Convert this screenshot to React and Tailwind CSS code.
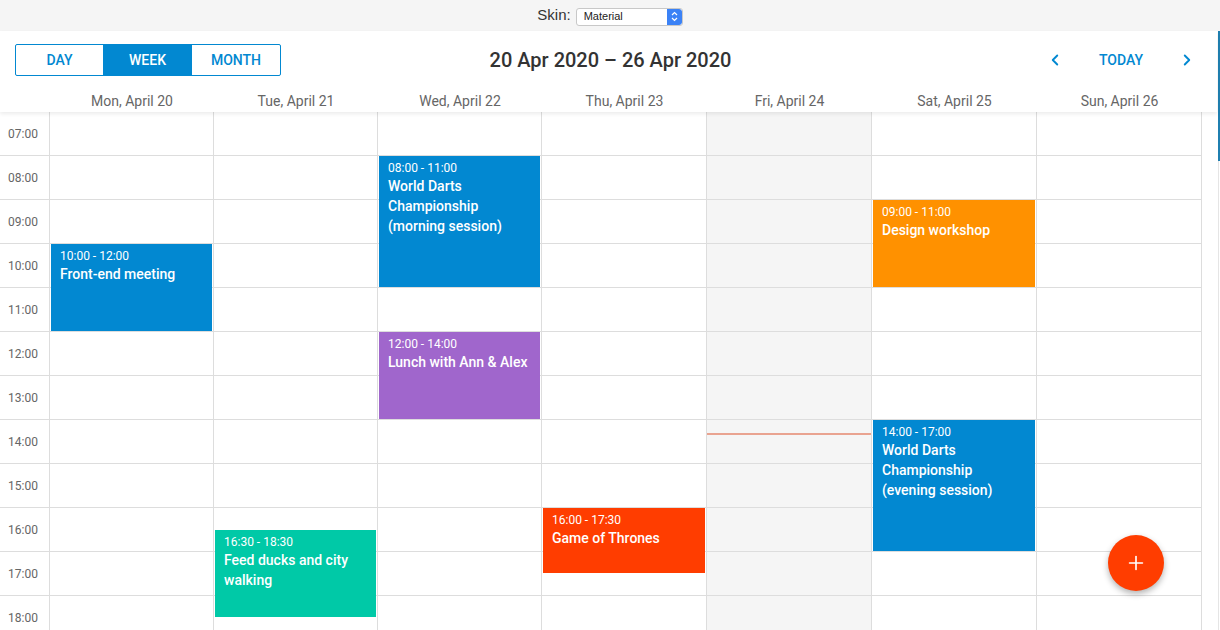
import React from "react";
import { ChevronLeft, ChevronRight, Plus } from "lucide-react";

const days = [
  "Mon, April 20",
  "Tue, April 21",
  "Wed, April 22",
  "Thu, April 23",
  "Fri, April 24",
  "Sat, April 25",
  "Sun, April 26",
];

const hours = ["07:00", "08:00", "09:00", "10:00", "11:00", "12:00", "13:00", "14:00", "15:00", "16:00", "17:00", "18:00"];

const ROW = 44;

const events = [
  { day: 0, start: 10, end: 12, time: "10:00 - 12:00", title: "Front-end meeting", color: "bg-[#0288d1]" },
  { day: 1, start: 16.5, end: 18.5, time: "16:30 - 18:30", title: "Feed ducks and city walking", color: "bg-[#00c9a7]" },
  { day: 2, start: 8, end: 11, time: "08:00 - 11:00", title: "World Darts Championship (morning session)", color: "bg-[#0288d1]" },
  { day: 2, start: 12, end: 14, time: "12:00 - 14:00", title: "Lunch with Ann & Alex", color: "bg-[#a066cc]" },
  { day: 3, start: 16, end: 17.5, time: "16:00 - 17:30", title: "Game of Thrones", color: "bg-[#ff3d00]" },
  { day: 5, start: 9, end: 11, time: "09:00 - 11:00", title: "Design workshop", color: "bg-[#ff9100]" },
  { day: 5, start: 14, end: 17, time: "14:00 - 17:00", title: "World Darts Championship (evening session)", color: "bg-[#0288d1]" },
];

const EventCard = ({ ev }) => (
  <div
    className={`absolute left-[1px] right-[1px] ${ev.color} text-white pl-[9px] pr-2 pt-[4px] overflow-hidden`}
    style={{ top: (ev.start - 7) * ROW, height: (ev.end - ev.start) * ROW - 1 }}
  >
    <div className="text-[12px] leading-[16px]">{ev.time}</div>
    <div className="text-[14px] leading-[20px] font-medium">{ev.title}</div>
  </div>
);

const App = () => {
  return (
    <div className="w-[1220px] h-[630px] overflow-hidden bg-white font-['Roboto',sans-serif] relative">
      {/* skin bar */}
      <div className="h-[31px] bg-[#f5f5f5] flex items-center justify-center gap-[5px]">
        <span className="text-[15px] text-[#333] font-['Liberation_Sans',sans-serif]">Skin:</span>
        <div className="w-[107px] h-[18px] mt-[2px] bg-white border border-[#c8c8c8] rounded-[3px] flex items-center justify-between overflow-hidden">
          <span className="text-[11px] text-[#222] pl-[7px] font-['Liberation_Sans',sans-serif]">Material</span>
          <div className="w-[15px] h-full bg-[#3b82f6] flex flex-col items-center justify-center rounded-r-[3px]">
            <svg width="7" height="11" viewBox="0 0 7 11" fill="none" stroke="white" strokeWidth="1.2">
              <path d="M1 4 L3.5 1.5 L6 4" />
              <path d="M1 7 L3.5 9.5 L6 7" />
            </svg>
          </div>
        </div>
      </div>

      <div className="flex">
        <div className="w-[1217px] relative">
          {/* header */}
          <div className="relative z-10 bg-white shadow-[0_2px_4px_rgba(0,0,0,0.08)]">
            <div className="h-[45px] pt-[13px] px-[15px] flex items-start">
              <div className="flex-1">
                <div className="inline-flex border border-[#0288d1] rounded-[2px] h-[32px] text-[14px] font-medium text-[#0288d1]">
                  <div className="w-[87px] flex items-center justify-center">DAY</div>
                  <div className="w-[89px] flex items-center justify-center bg-[#0288d1] text-white">WEEK</div>
                  <div className="w-[88px] flex items-center justify-center">MONTH</div>
                </div>
              </div>
              <div className="h-[32px] pl-[10px] flex items-center text-[20px] font-medium text-[#333]">
                20 Apr 2020 – 26 Apr 2020
              </div>
              <div className="flex-1 flex justify-end items-center h-[32px] text-[#0288d1] pr-[6px]">
                <ChevronLeft size={18} strokeWidth={2.5} />
                <span className="text-[14px] font-medium mx-[35px]">TODAY</span>
                <ChevronRight size={18} strokeWidth={2.5} />
              </div>
            </div>
            <div className="h-[36px] pb-[1px] flex items-end">
              <div className="w-[50px]" />
              <div className="w-[1152px] grid grid-cols-[164px_164px_164px_165px_165px_165px_165px]">
                {days.map((d) => (
                  <div key={d} className="text-center text-[14px] leading-[20px] text-[#666]">{d}</div>
                ))}
              </div>
            </div>
          </div>

          {/* grid */}
          <div className="flex">
            <div className="w-[50px] border-r border-[#ddd]">
              {hours.map((h) => (
                <div key={h} className="h-[44px] border-b border-[#ddd] flex items-center pl-[8px] text-[12px] text-[#666]">
                  {h}
                </div>
              ))}
            </div>
            <div className="w-[1152px] grid grid-cols-[164px_164px_164px_165px_165px_165px_165px]">
              {days.map((d, i) => (
                <div key={d} className={`relative border-r border-[#ddd] ${i === 4 ? "bg-[#f5f5f5]" : ""}`}>
                  {hours.map((h) => (
                    <div key={h} className="h-[44px] border-b border-[#ddd]" />
                  ))}
                  {i === 4 && <div className="absolute left-0 right-0 top-[321px] h-[2px] bg-[#e9a390]" />}
                  {events.filter((e) => e.day === i).map((ev) => (
                    <EventCard key={ev.time + ev.title} ev={ev} />
                  ))}
                </div>
              ))}
            </div>
          </div>

          <div className="absolute left-[1108px] top-[504px] w-[56px] h-[56px] rounded-full bg-[#ff3d00] text-white flex items-center justify-center shadow-[0_3px_6px_rgba(0,0,0,0.3)] z-20">
            <Plus size={22} strokeWidth={1.8} />
          </div>
        </div>
        <div className="w-[3px] flex flex-col">
          <div className="h-[130px] w-[2px] ml-[1px] bg-[#1f7fb0]" />
          <div className="flex-1 w-[1px] ml-[1px] bg-[#e5e5e5]" />
        </div>
      </div>
    </div>
  );
};

export default App;
